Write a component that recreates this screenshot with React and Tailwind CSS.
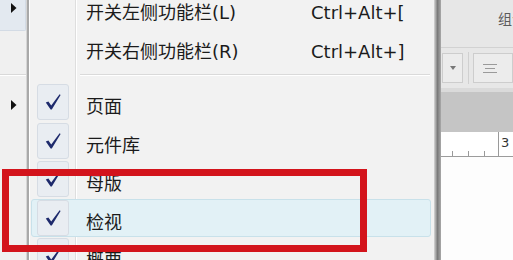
import React from "react";

function Arrow() {
  return (
    <svg width="6" height="10" viewBox="0 0 6 10">
      <polygon points="0,0 5.5,5 0,10" fill="#111" />
    </svg>
  );
}

function Check() {
  return (
    <svg width="18" height="18" viewBox="0 0 18 18">
      <path d="M1.8 9.6 L4.4 8.6 L7.2 12.6 L15.6 1.2 L16.6 2 L7.8 16.4 L6.6 16.4 Z" fill="#1e2a6c" />
    </svg>
  );
}

function Row({ label, shortcut, checked, active }) {
  return (
    <div
      className={
        "h-[38.5px] ml-[1px] mr-[3px] flex shrink-0 rounded-[3px] border " +
        (active ? "bg-[#e2f1f6] border-[#c8e1ea]" : "border-transparent")
      }
    >
      <div className="w-[43px] shrink-0 pl-[5px] pt-[0px]">
        {checked && (
          <div className="w-[32px] h-[36px] rounded-[3px] border border-[#d6dce4] bg-[#e9edf2] flex items-center justify-center">
            <Check />
          </div>
        )}
      </div>
      <div className={"w-[1px] shrink-0 " + (active ? "bg-transparent" : "bg-[#dedede]")} />
      <div className={"w-[1px] shrink-0 " + (active ? "bg-transparent" : "bg-white")} />
      <div className="flex pl-[9px] pt-[10px] leading-[26px] whitespace-nowrap">
        <span className="w-[225px]">{label}</span>
        {shortcut && <span>{shortcut}</span>}
      </div>
    </div>
  );
}

export default function App() {
  return (
    <div className="relative w-[513px] h-[260px] overflow-hidden flex bg-[#f2f2f2] text-[18px] text-[#1b1b1b] font-['DejaVu_Sans','Noto_Sans_CJK_SC',sans-serif]">
      {/* parent menu strip */}
      <div className="w-[26px] shrink-0 flex flex-col bg-[#f0f0f0]">
        <div className="h-[31px] shrink-0 bg-[#e3e9f0] border-b border-r border-[#d3dbe5] rounded-br-[2px] flex justify-end pr-[8px] pt-[3px]">
          <Arrow />
        </div>
        <div className="h-[43px] shrink-0" />
        <div className="h-[2px] shrink-0 border-t border-[#d9d9d9] bg-white" />
        <div className="h-[24px] shrink-0" />
        <div className="flex justify-end pr-[9px]">
          <Arrow />
        </div>
      </div>
      <div className="w-[1px] shrink-0 bg-[#d6d6d6]" />
      <div className="w-[2px] shrink-0 bg-[#a9a9a9]" />

      {/* submenu */}
      <div className="w-[405px] shrink-0 border-l border-white bg-[#f2f2f2] relative">
        <div className="absolute left-[45px] top-0 bottom-0 w-[1px] bg-[#dedede]" />
        <div className="absolute left-[46px] top-0 bottom-0 w-[1px] bg-white" />
        <div className="relative flex flex-col -mt-[11px]">
          <Row label="开关左侧功能栏(L)" shortcut="Ctrl+Alt+[" />
          <Row label="开关右侧功能栏(R)" shortcut="Ctrl+Alt+]" />
          <div className="h-[17px] shrink-0 pl-[50px] pr-[4px] pt-[8px]">
            <div className="h-[2px] border-t border-[#dadada] bg-white" />
          </div>
          <Row label="页面" checked />
          <Row label="元件库" checked />
          <Row label="母版" checked />
          <Row label="检视" checked active />
          <Row label="概要" checked />
        </div>
      </div>

      {/* shadow / border */}
      <div className="w-[7px] shrink-0 bg-linear-to-r from-[#d8d8d8] via-[#7b7b7b] to-[#a9a9a9]" />

      {/* app area */}
      <div className="flex-1 flex flex-col bg-white">
        <div className="h-[47px] shrink-0 bg-[#e7e7e7] pl-[57px] pt-[9px] text-[14px] text-[#5c5c5c] whitespace-nowrap overflow-hidden">
          组合
        </div>
        <div className="h-[1px] shrink-0 bg-[#d2d2d2]" />
        <div className="h-[40px] shrink-0 bg-[#e7e7e7] flex items-center">
          <div className="ml-[1px] w-[21px] h-[30px] border border-[#cdcdcd] bg-[#ececec] flex items-center justify-center">
            <svg width="6" height="4" viewBox="0 0 6 4">
              <polygon points="0,0 6,0 3,4" fill="#777" />
            </svg>
          </div>
          <div className="ml-[5px] w-[1px] h-[32px] bg-[#d0d0d0]" />
          <div className="ml-[4px] w-[40px] h-[30px] border border-[#cdcdcd] bg-[#ececec] flex flex-col justify-center pl-[9px] gap-[3px]">
            <div className="w-[14px] h-[1px] bg-[#9a9a9a]" />
            <div className="w-[10px] h-[1px] bg-[#9a9a9a] ml-[2px]" />
            <div className="w-[14px] h-[1px] bg-[#9a9a9a]" />
          </div>
        </div>
        <div className="h-[4px] shrink-0 bg-[#dadada]" />
        <div className="h-[40px] shrink-0 bg-[#c5c5c5]" />
        <div className="h-[25px] shrink-0 bg-white border-b border-[#9c9c9c] flex items-end relative">
          <div className="absolute left-[11px] bottom-0 w-[1px] h-[5px] bg-[#9a9a9a]" />
          <div className="absolute left-[27px] bottom-0 w-[1px] h-[5px] bg-[#9a9a9a]" />
          <div className="absolute left-[43px] bottom-0 w-[1px] h-[5px] bg-[#9a9a9a]" />
          <div className="absolute left-[57px] top-0 bottom-0 w-[1px] bg-[#9a9a9a]" />
          <div className="absolute left-[60px] top-[3px] text-[13px] leading-[16px] text-[#333]">3</div>
        </div>
        <div className="flex-1 bg-[#fdfdfd]" />
      </div>

      {/* red annotation */}
      <div className="absolute left-[2px] top-[169px] w-[365px] h-[83px] border-[7px] border-[#d3141c]" />
    </div>
  );
}
